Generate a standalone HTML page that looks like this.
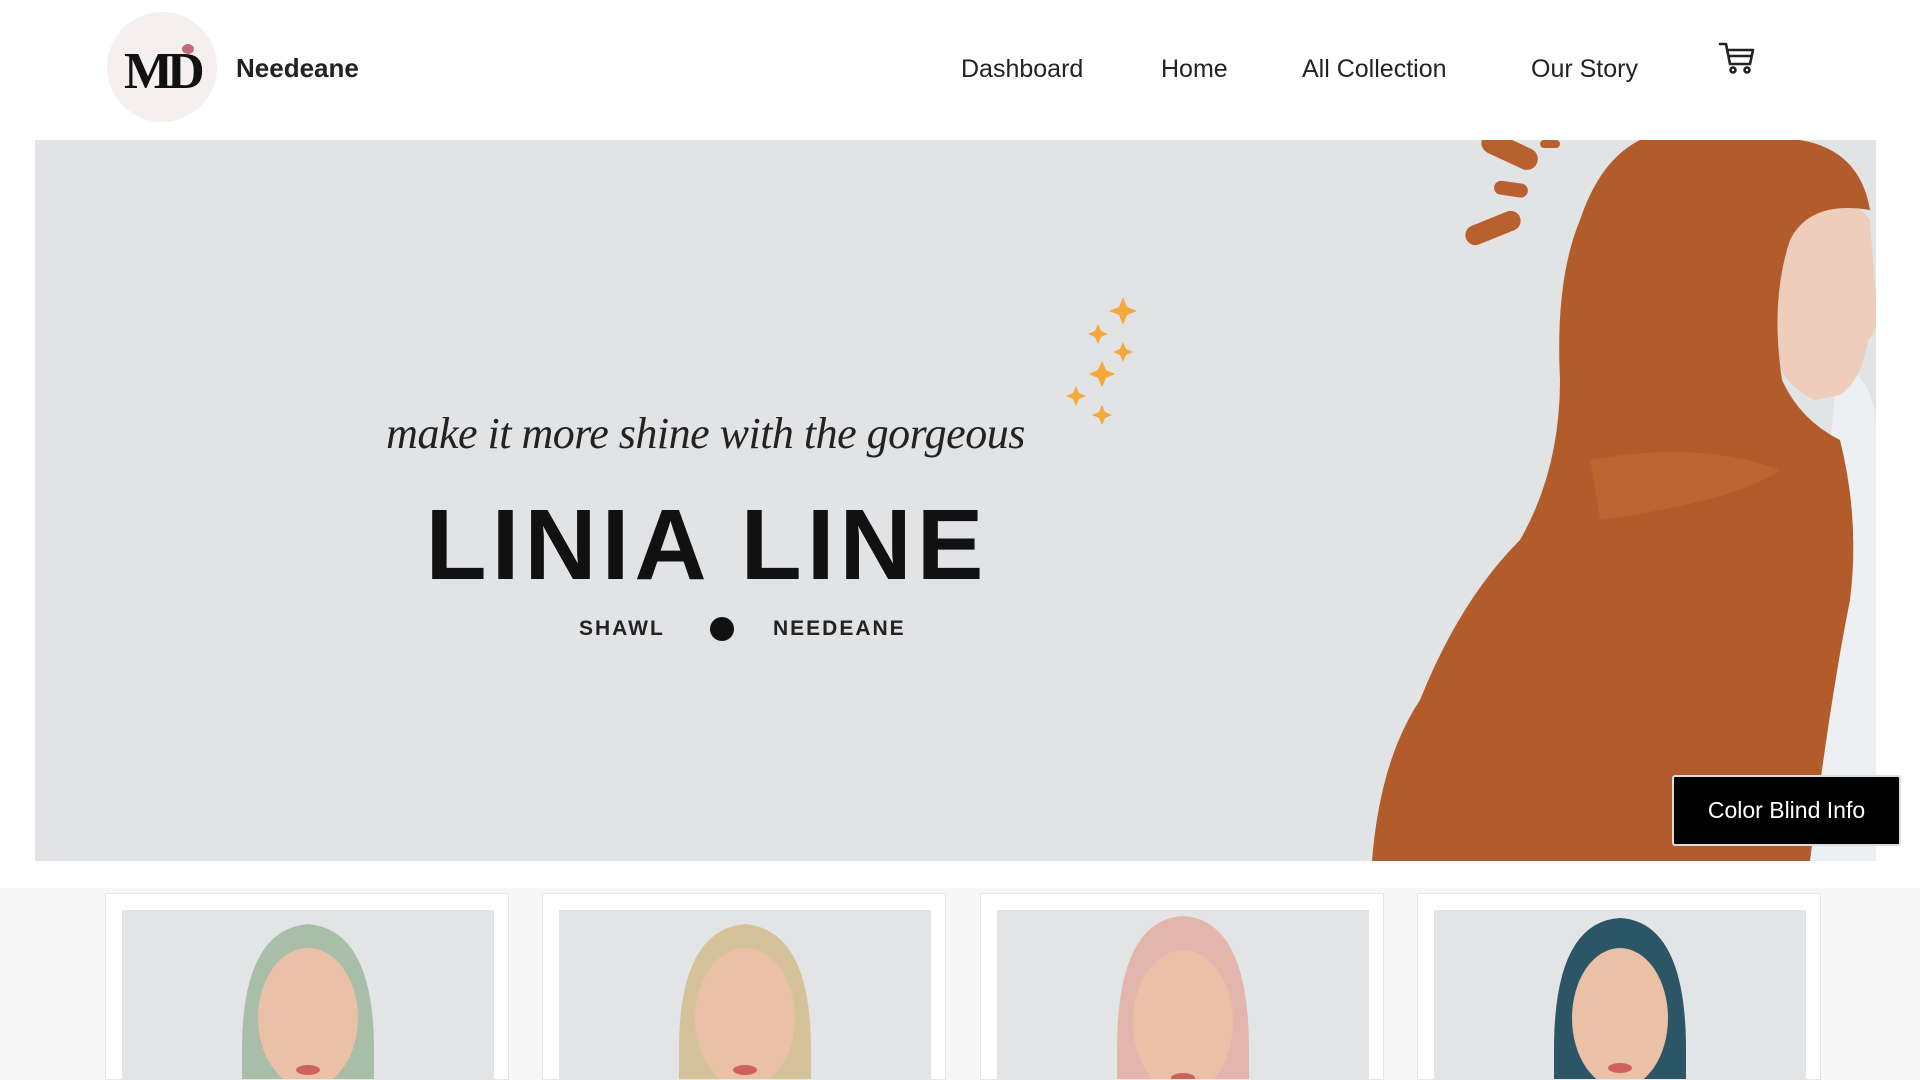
<!DOCTYPE html>
<html><head><meta charset="utf-8"><style>
*{margin:0;padding:0;box-sizing:border-box}
html,body{width:1920px;height:1080px;overflow:hidden}
body{background:#fff;font-family:"Liberation Sans",sans-serif;position:relative}
.abs{position:absolute}
.nav a{position:absolute;top:55px;font-size:25px;color:#222;text-decoration:none;white-space:nowrap}
.card{position:absolute;top:893px;width:404px;height:187px;background:#fff;border:1px solid #e6e6e6;overflow:hidden}
.card .img{position:absolute;left:16px;top:16px;width:372px;height:200px;background:#e3e4e6;overflow:hidden}
</style></head><body>
<div class="abs" style="left:107px;top:12px;width:110px;height:110px;border-radius:50%;background:#f6eff0"></div>
<div class="abs" style="left:124px;top:42px;font-family:'Liberation Serif',serif;font-weight:bold;font-size:52px;color:#111;letter-spacing:-6px">MD</div>
<div class="abs" style="left:182px;top:44px;width:12px;height:10px;border-radius:50%;background:#c46a7a"></div>
<div class="abs" style="left:236px;top:53px;font-size:26px;font-weight:bold;color:#222">Needeane</div>
<div class="nav">
<a style="left:961px">Dashboard</a><a style="left:1161px">Home</a><a style="left:1302px">All Collection</a><a style="left:1531px">Our Story</a>
</div>
<svg class="abs" style="left:1718px;top:40px" width="38" height="36" viewBox="0 0 38 36" fill="none" stroke="#222" stroke-width="2.6" stroke-linejoin="round" stroke-linecap="round"><path d="M2 4h6l4 20h20l3-14H10"/><path d="M12 16h21"/><circle cx="15" cy="30" r="2.5"/><circle cx="29" cy="30" r="2.5"/></svg>

<div class="abs" style="left:35px;top:140px;width:1841px;height:721px;background:#e2e3e5;overflow:hidden">
<svg class="abs" style="left:0;top:0" width="1841" height="721" viewBox="35 140 1841 721">
<g fill="#b8602e"><rect x="1480" y="140" width="60" height="22" rx="11" transform="rotate(25 1510 150)"/><rect x="1494" y="182" width="34" height="14" rx="7" transform="rotate(8 1510 189)"/><rect x="1464" y="218" width="58" height="20" rx="10" transform="rotate(-22 1493 228)"/><rect x="1540" y="140" width="20" height="8" rx="4"/></g>
<path d="M1838 360 Q1876 380 1876 430 L1876 861 L1700 861 Q1790 700 1820 560Z" fill="#edf0f2"/>
<path d="M1780 200 Q1840 180 1870 220 L1876 300 Q1880 330 1868 340 Q1862 380 1840 395 L1815 400 Q1790 390 1775 360 Q1760 280 1780 200Z" fill="#efcdbd"/>
<path d="M1640 140 L1800 140 Q1860 150 1870 210 Q1810 200 1790 240 Q1770 300 1782 380 Q1800 420 1840 440 Q1860 520 1850 600 Q1830 700 1810 861 L1372 861 Q1380 760 1420 700 Q1460 600 1520 540 Q1560 470 1560 380 Q1555 280 1580 220 Q1600 160 1640 140Z" fill="#b35c2b"/>
<path d="M1590 460 Q1700 440 1780 470 Q1740 500 1600 520Z" fill="#c06a36" opacity=".6"/>
<g fill="#f4a93c">
<path d="M1123 297l4 10 10 4-10 4-4 10-4-10-10-4 10-4z"/>
<path d="M1098 324l3 7 7 3-7 3-3 7-3-7-7-3 7-3z"/>
<path d="M1123 342l3 7 7 3-7 3-3 7-3-7-7-3 7-3z"/>
<path d="M1102 361l4 9 9 4-9 4-4 9-4-9-9-4 9-4z"/>
<path d="M1076 386l3 7 7 3-7 3-3 7-3-7-7-3 7-3z"/>
<path d="M1102 405l3 7 7 3-7 3-3 7-3-7-7-3 7-3z"/>
</g>
</svg>
<div class="abs" style="left:298px;top:268px;width:745px;text-align:center;white-space:nowrap;font-family:'Liberation Serif',serif;font-style:italic;font-size:44px;color:#222;letter-spacing:-0.5px">make it more shine with the gorgeous</div>
<div class="abs" style="left:322px;top:340px;width:700px;text-align:center;white-space:nowrap;font-weight:bold;font-size:100px;color:#111;letter-spacing:5px;line-height:1.3">LINIA LINE</div>
<div class="abs" style="left:544px;top:477px;font-weight:bold;font-size:21px;color:#222;letter-spacing:2px">SHAWL</div>
<div class="abs" style="left:675px;top:477px;width:24px;height:24px;border-radius:50%;background:#111"></div>
<div class="abs" style="left:738px;top:477px;font-weight:bold;font-size:21px;color:#222;letter-spacing:2px">NEEDEANE</div>
</div>
<div class="abs" style="left:1672px;top:775px;width:229px;height:71px;background:#000;border:2px solid #ddd;border-radius:3px;color:#fff;font-size:23px;line-height:67px;text-align:center">Color Blind Info</div>

<div class="abs" style="left:0;top:888px;width:1920px;height:192px;background:#f7f7f7"></div>
<div class="card" style="left:105px"><div class="img"><svg width="372" height="200"><path d="M120 140 Q120 20 186 14 Q252 20 252 140 L252 200 L120 200Z" fill="#a8bea9"/><ellipse cx="186" cy="108" rx="50" ry="70" fill="#eac1a6"/><ellipse cx="186" cy="160" rx="12" ry="5" fill="#d0605a"/></svg></div></div>
<div class="card" style="left:542px"><div class="img"><svg width="372" height="200"><path d="M120 140 Q120 20 186 14 Q252 20 252 140 L252 200 L120 200Z" fill="#d5c29a"/><ellipse cx="186" cy="108" rx="50" ry="70" fill="#eac1a6"/><ellipse cx="186" cy="160" rx="12" ry="5" fill="#d0605a"/></svg></div></div>
<div class="card" style="left:980px"><div class="img"><svg width="372" height="200"><path d="M120 140 Q120 10 186 6 Q252 10 252 140 L252 200 L120 200Z" fill="#e3b6ad"/><ellipse cx="186" cy="112" rx="50" ry="72" fill="#eac1a6"/><ellipse cx="186" cy="168" rx="12" ry="5" fill="#d0605a"/></svg></div></div>
<div class="card" style="left:1417px"><div class="img"><svg width="372" height="200"><path d="M120 140 Q120 12 186 8 Q252 12 252 140 L252 200 L120 200Z" fill="#2c5565"/><ellipse cx="186" cy="108" rx="48" ry="70" fill="#eac1a6"/><ellipse cx="186" cy="158" rx="12" ry="5" fill="#d0605a"/></svg></div></div>
</body></html>
